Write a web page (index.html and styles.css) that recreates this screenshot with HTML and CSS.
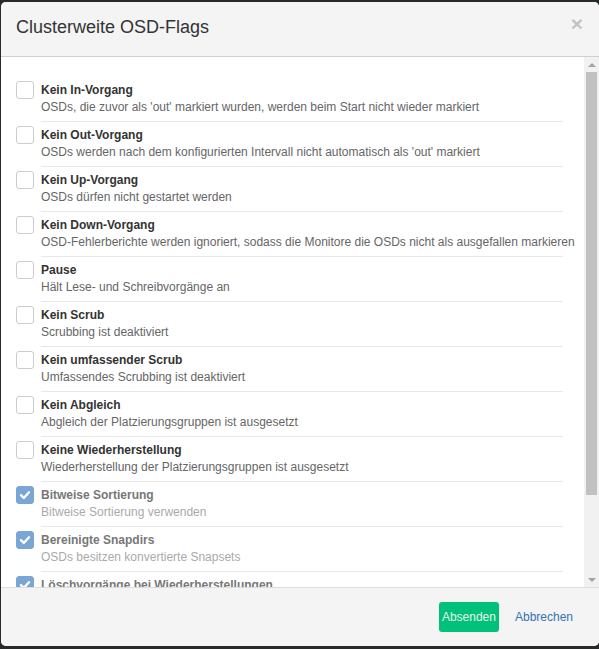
FILE: index.html
```html
<!DOCTYPE html>
<html lang="de">
<head>
<meta charset="utf-8">
<title>Clusterweite OSD-Flags</title>
<link rel="stylesheet" href="styles.css">
</head>
<body>
<div class="modal">
  <div class="modal-header">
    <h4 class="modal-title">Clusterweite OSD-Flags</h4>
    <span class="close">×</span>
  </div>
  <div class="modal-body">
    <div class="scroll-area">
      <ul class="flags">
        <li class="flag"><span class="cb"></span><div class="text"><div class="label">Kein In-Vorgang</div><div class="desc">OSDs, die zuvor als 'out' markiert wurden, werden beim Start nicht wieder markiert</div></div></li>
        <li class="flag"><span class="cb"></span><div class="text"><div class="label">Kein Out-Vorgang</div><div class="desc">OSDs werden nach dem konfigurierten Intervall nicht automatisch als 'out' markiert</div></div></li>
        <li class="flag"><span class="cb"></span><div class="text"><div class="label">Kein Up-Vorgang</div><div class="desc">OSDs dürfen nicht gestartet werden</div></div></li>
        <li class="flag"><span class="cb"></span><div class="text"><div class="label">Kein Down-Vorgang</div><div class="desc">OSD-Fehlerberichte werden ignoriert, sodass die Monitore die OSDs nicht als ausgefallen markieren</div></div></li>
        <li class="flag"><span class="cb"></span><div class="text"><div class="label">Pause</div><div class="desc">Hält Lese- und Schreibvorgänge an</div></div></li>
        <li class="flag"><span class="cb"></span><div class="text"><div class="label">Kein Scrub</div><div class="desc">Scrubbing ist deaktiviert</div></div></li>
        <li class="flag"><span class="cb"></span><div class="text"><div class="label">Kein umfassender Scrub</div><div class="desc">Umfassendes Scrubbing ist deaktiviert</div></div></li>
        <li class="flag"><span class="cb"></span><div class="text"><div class="label">Kein Abgleich</div><div class="desc">Abgleich der Platzierungsgruppen ist ausgesetzt</div></div></li>
        <li class="flag"><span class="cb"></span><div class="text"><div class="label">Keine Wiederherstellung</div><div class="desc">Wiederherstellung der Platzierungsgruppen ist ausgesetzt</div></div></li>
        <li class="flag disabled"><span class="cb checked"><svg viewBox="0 0 18 18" width="18" height="18"><polyline points="5,9.2 7.8,12 13,6.3" fill="none" stroke="#fff" stroke-width="2.4" stroke-linecap="round" stroke-linejoin="round"/></svg></span><div class="text"><div class="label">Bitweise Sortierung</div><div class="desc">Bitweise Sortierung verwenden</div></div></li>
        <li class="flag disabled"><span class="cb checked"><svg viewBox="0 0 18 18" width="18" height="18"><polyline points="5,9.2 7.8,12 13,6.3" fill="none" stroke="#fff" stroke-width="2.4" stroke-linecap="round" stroke-linejoin="round"/></svg></span><div class="text"><div class="label">Bereinigte Snapdirs</div><div class="desc">OSDs besitzen konvertierte Snapsets</div></div></li>
        <li class="flag disabled"><span class="cb checked"><svg viewBox="0 0 18 18" width="18" height="18"><polyline points="5,9.2 7.8,12 13,6.3" fill="none" stroke="#fff" stroke-width="2.4" stroke-linecap="round" stroke-linejoin="round"/></svg></span><div class="text"><div class="label">Löschvorgänge bei Wiederherstellungen</div><div class="desc">Löschvorgänge während der Wiederherstellung werden unterstützt</div></div></li>
      </ul>
    </div>
    <div class="scrollbar">
      <span class="sb-btn"><span class="arrow-up"></span></span>
      <span class="sb-track"><span class="sb-thumb"></span></span>
      <span class="sb-btn"><span class="arrow-down"></span></span>
    </div>
  </div>
  <div class="modal-footer">
    <button class="btn-submit" type="button">Absenden</button>
    <a class="btn-link" href="#">Abbrechen</a>
  </div>
</div>
</body>
</html>
```

FILE: styles.css
```css
* { box-sizing: border-box; }
html, body { height: 100%; }
body {
  margin: 0;
  background: #262a28;
  font-family: "Liberation Sans", Arial, sans-serif;
  font-size: 12px;
  color: #333;
  overflow: hidden;
}
.modal {
  margin: 2px 0 0 1px;
  height: 644px;
  background: #fff;
  border-radius: 5px;
  overflow: hidden;
  display: flex;
  flex-direction: column;
}
.modal-header {
  flex: 0 0 55px;
  background: #f4f4f4;
  border-bottom: 1px solid #cfcfcf;
  display: flex;
  align-items: center;
  justify-content: space-between;
  padding: 0 16px 4px 15px;
}
.modal-title {
  margin: 0;
  font-size: 18px;
  font-weight: normal;
  color: #333;
  line-height: 26px;
}
.close {
  font-size: 21px;
  font-weight: bold;
  color: #000;
  opacity: 0.2;
  line-height: 1;
  margin-top: -8px;
}
.modal-body {
  flex: 1 1 auto;
  min-height: 0;
  display: flex;
}
.scroll-area {
  flex: 1 1 auto;
  min-width: 0;
  overflow: hidden;
  padding: 25px 21px 0 15px;
}
.scrollbar {
  flex: 0 0 15px;
  background: #f1f1f1;
  display: flex;
  flex-direction: column;
}
.sb-btn {
  flex: 0 0 15px;
  display: flex;
  align-items: center;
  justify-content: center;
}
.arrow-up {
  width: 0;
  height: 0;
  border-left: 4px solid transparent;
  border-right: 4px solid transparent;
  border-bottom: 4px solid #a3a3a3;
}
.arrow-down {
  width: 0;
  height: 0;
  border-left: 4px solid transparent;
  border-right: 4px solid transparent;
  border-top: 4px solid #a3a3a3;
}
.sb-track {
  flex: 1 1 auto;
  padding: 0 2px;
}
.sb-thumb {
  display: block;
  height: 423px;
  background: #c1c1c1;
}
.flags {
  list-style: none;
  margin: 0;
  padding: 0;
}
.flag {
  display: flex;
  align-items: flex-start;
  margin-bottom: 5px;
}
.cb {
  flex: 0 0 18px;
  width: 18px;
  height: 18px;
  border: 1px solid #ccc;
  border-radius: 3px;
  background: #fff;
  margin-right: 7px;
  margin-top: -1px;
}
.cb.checked {
  background: #79a6d4;
  border-color: #79a6d4;
  position: relative;
}
.cb.checked svg {
  position: absolute;
  left: -1px;
  top: -1px;
}
.text {
  flex: 1 1 auto;
  border-bottom: 1px solid #e8e8e8;
  padding-bottom: 5px;
  min-width: 0;
}
.label {
  font-weight: bold;
  line-height: 17px;
  color: #333;
}
.desc {
  line-height: 17px;
  color: #666;
  white-space: nowrap;
}
.disabled .label { color: #777; }
.disabled .desc { color: #aaa; }
.modal-footer {
  flex: 0 0 59px;
  background: #f4f4f4;
  border-top: 1px solid #ddd;
  display: flex;
  align-items: center;
  justify-content: flex-end;
  padding: 0 26px 0 15px;
}
.btn-submit {
  font-family: "Liberation Sans", Arial, sans-serif;
  font-size: 12px;
  background: #00c07a;
  color: #e6f6ee;
  border: none;
  border-radius: 3px;
  height: 30px;
  padding: 0 3px;
  margin-right: 16px;
  cursor: pointer;
}
.btn-link {
  color: #3673b5;
  text-decoration: none;
  font-size: 12px;
}
```
